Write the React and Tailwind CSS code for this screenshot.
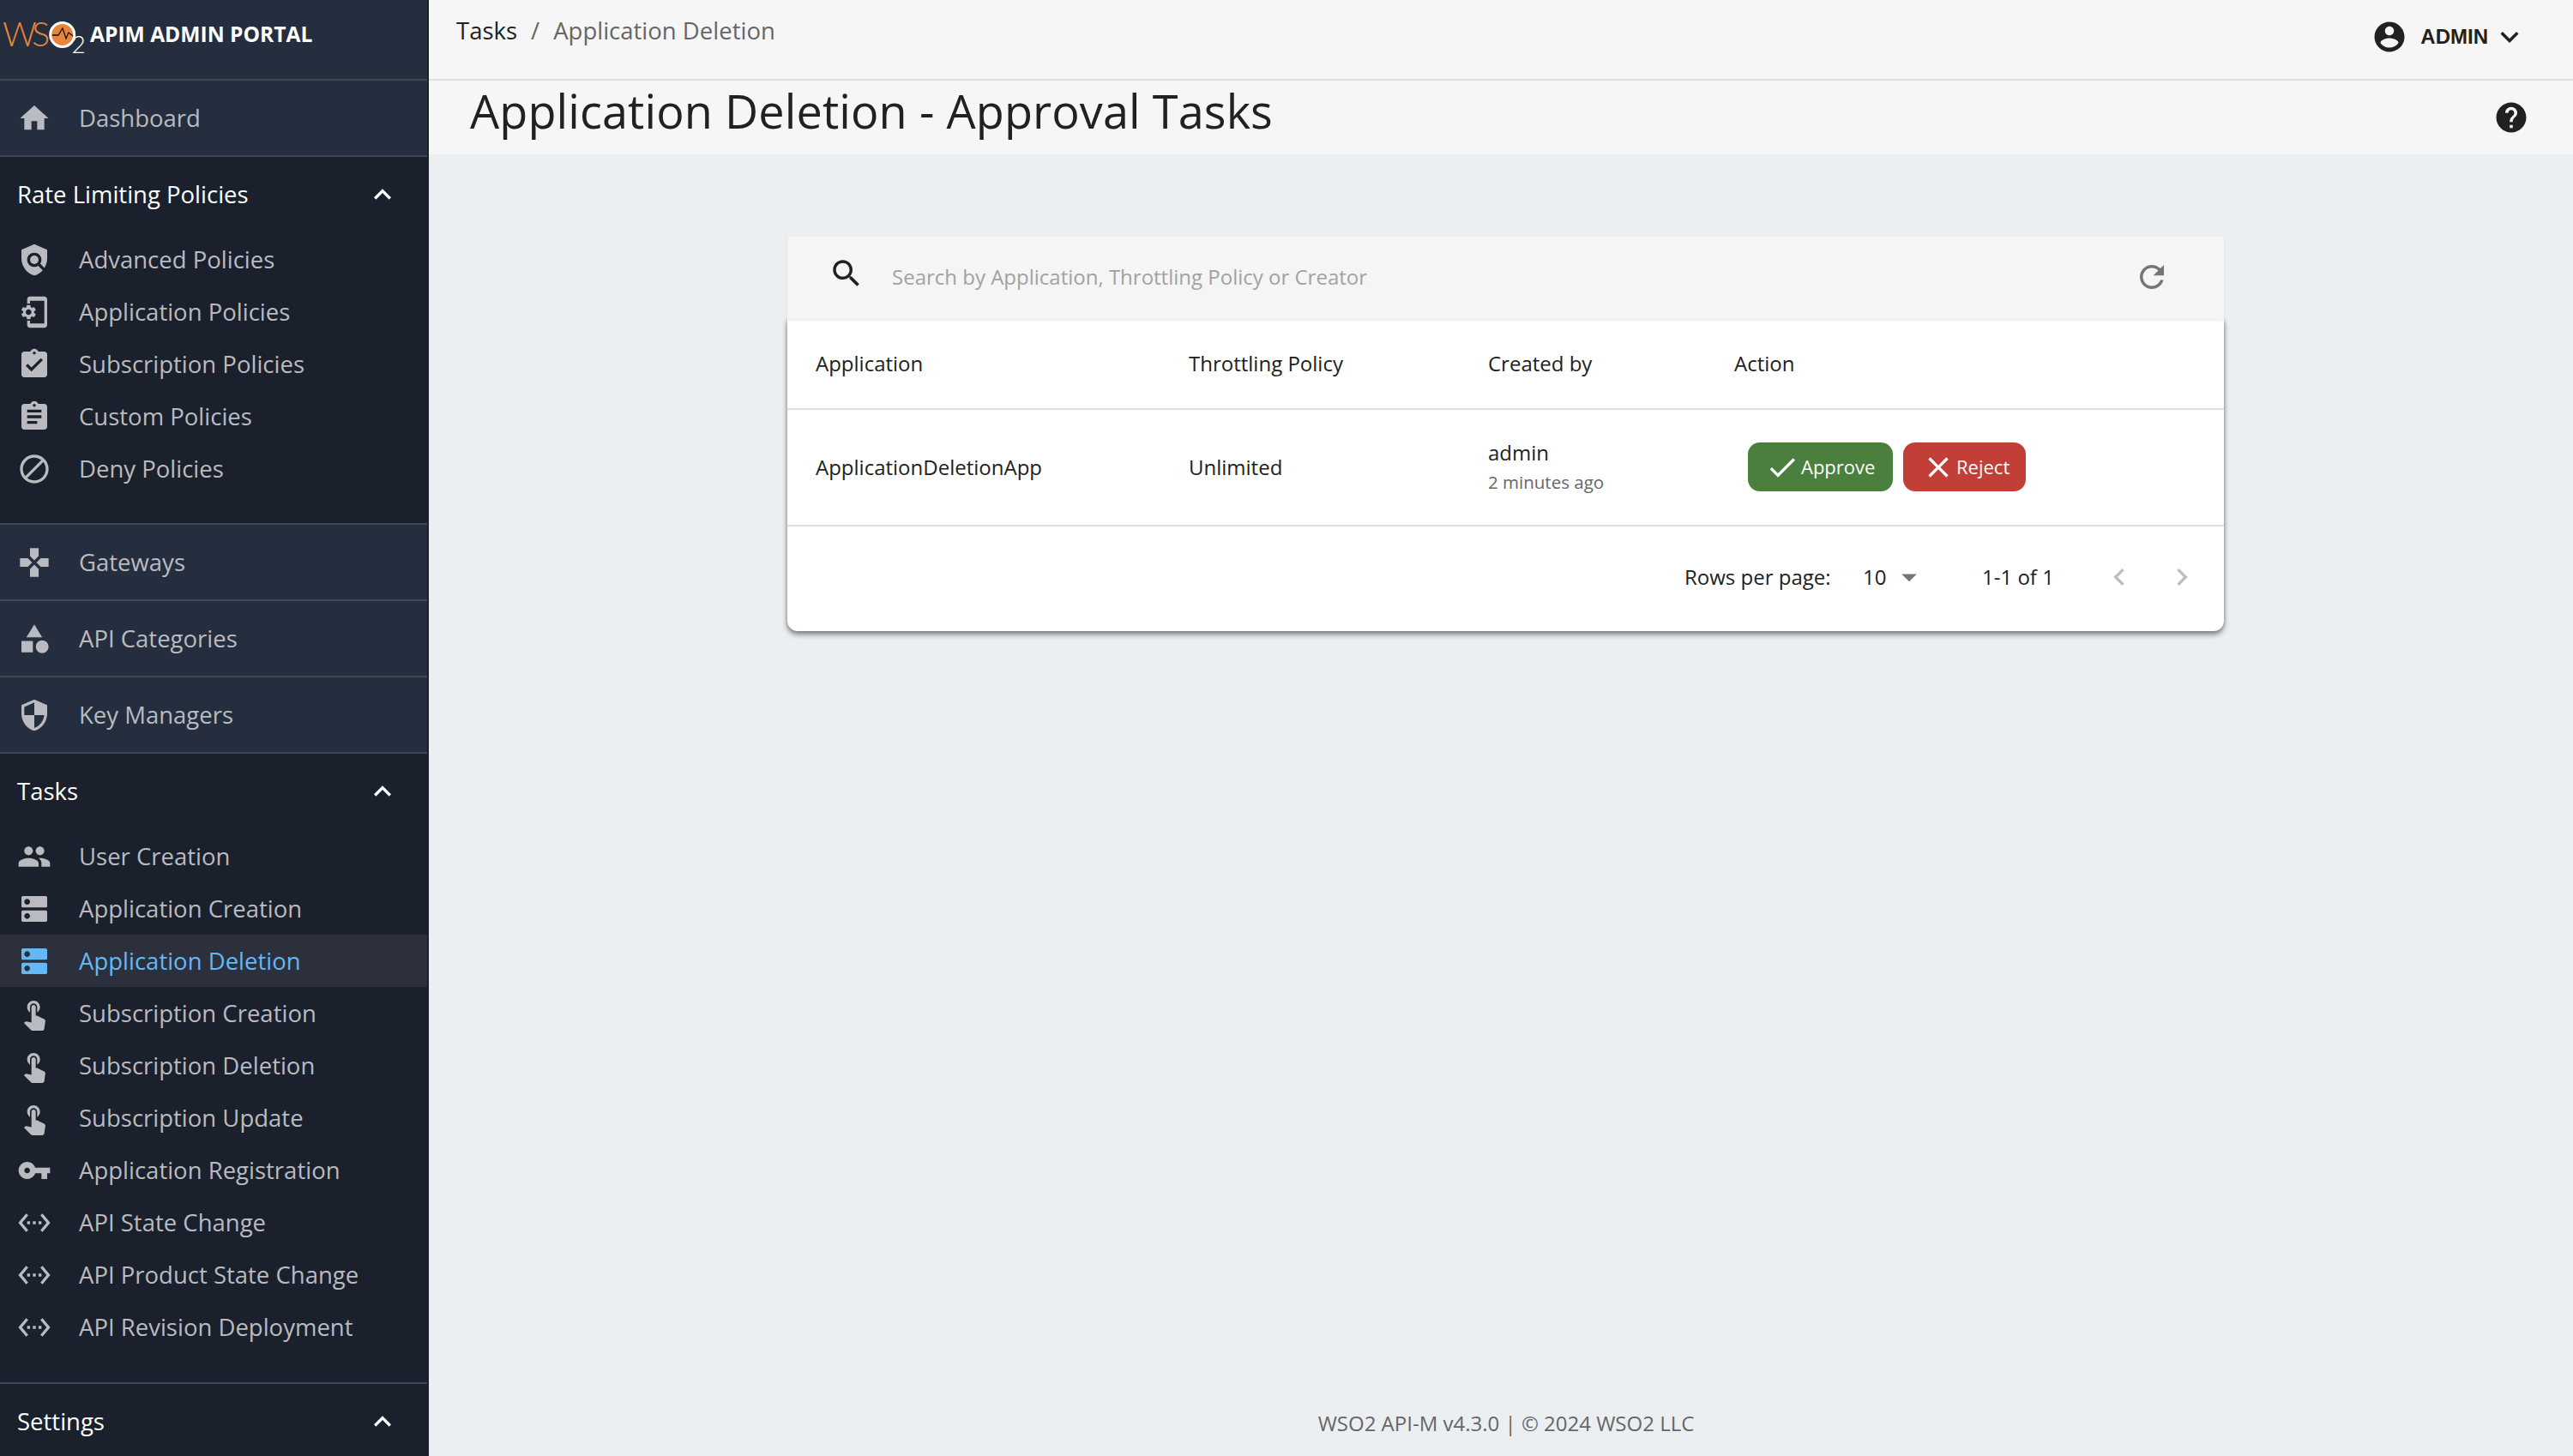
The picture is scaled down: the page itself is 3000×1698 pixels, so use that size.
const ICONS = {
  home: 'M10 20v-6h4v6h5v-8h3L12 3 2 12h3v8z',
  policy: 'M21 5l-9-4-9 4v6c0 5.55 3.84 10.74 9 12 2.3-.56 4.33-1.9 5.88-3.71l-3.12-3.12c-1.94 1.29-4.58 1.07-6.29-.64-1.95-1.95-1.95-5.12 0-7.07 1.95-1.95 5.12-1.95 7.07 0 1.71 1.71 1.92 4.35.64 6.29l2.9 2.9C20.29 15.69 21 13.38 21 11V5z M12 9a3 3 0 1 0 0 6 3 3 0 0 0 0-6z',
  phoneSetup: 'M11.8 12.5v-1l1.1-.8c.1-.1.1-.2.1-.3l-1-1.7c-.1-.1-.2-.2-.3-.1l-1.3.4c-.3-.2-.6-.4-.9-.5l-.2-1.3c0-.1-.1-.2-.3-.2H7c-.1 0-.2.1-.3.2l-.2 1.3c-.3.1-.6.3-.9.5l-1.3-.5c-.1 0-.2 0-.3.1l-1 1.7c-.1.1 0 .2.1.3l1.1.8v1l-1.1.8c-.1.2-.1.3-.1.4l1 1.7c.1.1.2.2.3.1l1.4-.4c.3.2.6.4.9.5l.2 1.3c-.1.1.1.2.2.2h2c.1 0 .2-.1.3-.2l.2-1.3c.3-.1.6-.3.9-.5l1.3.5c.1 0 .2 0 .3-.1l1-1.7c.1-.1 0-.2-.1-.3l-1.1-.9zM8 14c-1.1 0-2-.9-2-2s.9-2 2-2 2 .9 2 2-.9 2-2 2zM19 1H9c-1.1 0-2 .9-2 2v3h2V4h10v16H9v-2H7v3c0 1.1.9 2 2 2h10c1.1 0 2-.9 2-2V3c0-1.1-.9-2-2-2z',
  assignmentDone: 'M19 3h-4.18C14.4 1.84 13.3 1 12 1c-1.3 0-2.4.84-2.82 2H5c-1.1 0-2 .9-2 2v14c0 1.1.9 2 2 2h14c1.1 0 2-.9 2-2V5c0-1.1-.9-2-2-2zm-7 0c.55 0 1 .45 1 1s-.45 1-1 1-1-.45-1-1 .45-1 1-1zm-2 14l-4-4 1.41-1.41L10 14.17l6.59-6.59L18 9l-8 8z',
  assignment: 'M19 3h-4.18C14.4 1.84 13.3 1 12 1c-1.3 0-2.4.84-2.82 2H5c-1.1 0-2 .9-2 2v14c0 1.1.9 2 2 2h14c1.1 0 2-.9 2-2V5c0-1.1-.9-2-2-2zm-7 0c.55 0 1 .45 1 1s-.45 1-1 1-1-.45-1-1 .45-1 1-1zm2 14H7v-2h7v2zm3-4H7v-2h10v2zm0-4H7V7h10v2z',
  block: 'M12 2C6.48 2 2 6.48 2 12s4.48 10 10 10 10-4.48 10-10S17.52 2 12 2zM4 12c0-4.42 3.58-8 8-8 1.85 0 3.55.63 4.9 1.69L5.69 16.9C4.63 15.55 4 13.85 4 12zm8 8c-1.85 0-3.55-.63-4.9-1.69L18.31 7.1C19.37 8.45 20 10.15 20 12c0 4.42-3.58 8-8 8z',
  gamepad: 'M15 7.5V2H9v5.5l3 3 3-3zM7.5 9H2v6h5.5l3-3-3-3zM9 16.5V22h6v-5.5l-3-3-3 3zM16.5 9l-3 3 3 3H22V9h-5.5z',
  category: 'M12 2l-5.5 9h11z M17.5 13a4.5 4.5 0 1 0 0 9 4.5 4.5 0 0 0 0-9z M3 13.5h8v8H3z',
  security: 'M12 1L3 5v6c0 5.55 3.84 10.74 9 12 5.16-1.26 9-6.45 9-12V5l-9-4zm0 10.99h7c-.53 4.12-3.28 7.79-7 8.94V12H5V6.3l7-3.11v8.8z',
  people: 'M16 11c1.66 0 2.99-1.34 2.99-3S17.66 5 16 5c-1.66 0-3 1.34-3 3s1.34 3 3 3zm-8 0c1.66 0 2.99-1.34 2.99-3S9.66 5 8 5C6.34 5 5 6.34 5 8s1.34 3 3 3zm0 2c-2.33 0-7 1.17-7 3.5V19h14v-2.5c0-2.33-4.67-3.5-7-3.5zm8 0c-.29 0-.62.02-.97.05 1.16.84 1.97 1.97 1.97 3.45V19h6v-2.5c0-2.33-4.67-3.5-7-3.5z',
  dns: 'M20 13H4c-.55 0-1 .45-1 1v6c0 .55.45 1 1 1h16c.55 0 1-.45 1-1v-6c0-.55-.45-1-1-1zM7 19c-1.1 0-2-.9-2-2s.9-2 2-2 2 .9 2 2-.9 2-2 2zM20 3H4c-.55 0-1 .45-1 1v6c0 .55.45 1 1 1h16c.55 0 1-.45 1-1V4c0-.55-.45-1-1-1zM7 9c-1.1 0-2-.9-2-2s.9-2 2-2 2 .9 2 2-.9 2-2 2z',
  touch: 'M9 11.24V7.5C9 6.12 10.12 5 11.5 5S14 6.12 14 7.5v3.74c1.21-.81 2-2.18 2-3.74C16 5.01 13.99 3 11.5 3S7 5.01 7 7.5c0 1.56.79 2.93 2 3.74zm9.84 4.63l-4.54-2.26c-.17-.07-.35-.11-.54-.11H13v-6c0-.83-.67-1.5-1.5-1.5S10 6.67 10 7.5v10.74l-3.43-.72c-.08-.01-.15-.03-.24-.03-.31 0-.59.13-.79.33l-.79.8 4.94 4.94c.27.27.65.44 1.06.44h6.79c.75 0 1.33-.55 1.44-1.28l.75-5.27c.01-.07.02-.14.02-.2 0-.62-.38-1.16-.91-1.38z',
  key: 'M12.65 10C11.83 7.67 9.61 6 7 6c-3.31 0-6 2.69-6 6s2.69 6 6 6c2.61 0 4.83-1.67 5.65-4H17v4h4v-4h2v-4H12.65zM7 14c-1.1 0-2-.9-2-2s.9-2 2-2 2 .9 2 2-.9 2-2 2z',
  ethernet: 'M7.77 6.76L6.23 5.48.82 12l5.41 6.52 1.54-1.28L3.42 12l4.35-5.24zM7 13h2v-2H7v2zm10-2h-2v2h2v-2zm-6 2h2v-2h-2v2zm6.77-7.52l-1.54 1.28L20.58 12l-4.35 5.24 1.54 1.28L23.18 12l-5.41-6.52z',
  expandLess: 'M12 8l-6 6 1.41 1.41L12 10.83l4.59 4.58L18 14z',
  expandMore: 'M16.59 8.59L12 13.17 7.41 8.59 6 10l6 6 6-6z',
  account: 'M12 2C6.48 2 2 6.48 2 12s4.48 10 10 10 10-4.48 10-10S17.52 2 12 2zm0 3c1.66 0 3 1.34 3 3s-1.34 3-3 3-3-1.34-3-3 1.34-3 3-3zm0 14.2c-2.5 0-4.71-1.28-6-3.22.03-1.99 4-3.08 6-3.08 1.99 0 5.97 1.09 6 3.08-1.29 1.94-3.5 3.22-6 3.22z',
  help: 'M12 2C6.48 2 2 6.48 2 12s4.48 10 10 10 10-4.48 10-10S17.52 2 12 2zm1 17h-2v-2h2v2zm2.07-7.75l-.9.92C13.45 12.9 13 13.5 13 15h-2v-.5c0-1.1.45-2.1 1.17-2.83l1.24-1.26c.37-.36.59-.86.59-1.41 0-1.1-.9-2-2-2s-2 .9-2 2H8c0-2.21 1.79-4 4-4s4 1.79 4 4c0 .88-.36 1.68-.93 2.25z',
  search: 'M15.5 14h-.79l-.28-.27C15.41 12.59 16 11.11 16 9.5 16 5.91 13.09 3 9.5 3S3 5.91 3 9.5 5.91 16 9.5 16c1.61 0 3.09-.59 4.23-1.57l.27.28v.79l5 4.99L20.49 19l-4.99-5zm-6 0C7.01 14 5 11.99 5 9.5S7.01 5 9.5 5 14 7.01 14 9.5 11.99 14 9.5 14z',
  refresh: 'M17.65 6.35C16.2 4.9 14.21 4 12 4c-4.42 0-7.99 3.58-7.99 8s3.57 8 7.99 8c3.73 0 6.84-2.55 7.73-6h-2.08c-.82 2.33-3.04 4-5.65 4-3.31 0-6-2.69-6-6s2.69-6 6-6c1.66 0 3.14.69 4.22 1.78L13 11h7V4l-2.35 2.35z',
  done: 'M9 16.2L4.8 12l-1.4 1.4L9 19 21 7l-1.4-1.4L9 16.2z',
  close: 'M19 6.41L17.59 5 12 10.59 6.41 5 5 6.41 10.59 12 5 17.59 6.41 19 12 13.41 17.59 19 19 17.59 13.41 12z',
  chevronLeft: 'M15.41 7.41L14 6l-6 6 6 6 1.41-1.41L10.83 12z',
  chevronRight: 'M10 6L8.59 7.41 13.17 12l-4.58 4.59L10 18l6-6z',
  dropDown: 'M7 10l5 5 5-5z',
};

const Icon = ({ name, className }) => (
  <svg viewBox="0 0 24 24" fill="currentColor" className={className}>
    <path d={ICONS[name]} />
  </svg>
);

const Logo = () => (
  <svg viewBox="0 0 104 70" className="w-[104px] h-[70px] shrink-0 self-start">
    <text x="3" y="54" fontFamily="Lato, sans-serif" fontWeight="300" fontSize="39" fill="#e8853a" textLength="55">WS</text>
    <circle cx="72.7" cy="40.5" r="14" fill="#e8853a" stroke="#fff" strokeWidth="3" />
    <polyline points="61,41 68,41 73,33 77,45 80,38 85,42" fill="none" stroke="#111" strokeWidth="1.3" />
    <text x="83.5" y="62" fontFamily="Lato, sans-serif" fontWeight="300" fontSize="28" fill="#fff">2</text>
  </svg>
);

const NavRow = ({ icon, label, active }) => (
  <div className={`flex items-center h-[61px] pl-5 mr-[2px] ${active ? 'bg-[#2c303c] text-[#64b8f4]' : 'text-[#b9bbc0]'}`}>
    <Icon name={icon} className="w-10 h-10 shrink-0 mr-8" />
    <span className="text-[27.5px]">{label}</span>
  </div>
);

const TopRow = ({ icon, label }) => (
  <div className="flex items-center h-[89px] pl-5 mr-[2px] bg-[#252e3e] border-b-2 border-[#3e4654] text-[#b9bbc0]">
    <Icon name={icon} className="w-10 h-10 shrink-0 mr-8" />
    <span className="text-[27.5px]">{label}</span>
  </div>
);

const Section = ({ title, children }) => (
  <div>
    <div className="flex items-center justify-between h-[89px] pl-5 pr-[34px] text-white">
      <span className="text-[27.5px] -mt-[2px]">{title}</span>
      <Icon name="expandLess" className="w-10 h-10 -mt-[2px]" />
    </div>
    {children}
  </div>
);

const Sidebar = () => (
  <aside className="w-[500px] shrink-0 h-full bg-[#1a202c] overflow-hidden">
    <div className="flex items-center h-[94px] mr-[2px] bg-[#252e3e] border-b-2 border-[#3e4654] text-white">
      <Logo />
      <span className="ml-px -mt-[12px] text-[24.6px] font-bold whitespace-nowrap">APIM ADMIN PORTAL</span>
    </div>
    <TopRow icon="home" label="Dashboard" />
    <Section title="Rate Limiting Policies">
      <NavRow icon="policy" label="Advanced Policies" />
      <NavRow icon="phoneSetup" label="Application Policies" />
      <NavRow icon="assignmentDone" label="Subscription Policies" />
      <NavRow icon="assignment" label="Custom Policies" />
      <NavRow icon="block" label="Deny Policies" />
    </Section>
    <div className="mt-[33px] mr-[2px] border-b-2 border-[#3e4654]" />
    <TopRow icon="gamepad" label="Gateways" />
    <TopRow icon="category" label="API Categories" />
    <TopRow icon="security" label="Key Managers" />
    <Section title="Tasks">
      <NavRow icon="people" label="User Creation" />
      <NavRow icon="dns" label="Application Creation" />
      <NavRow icon="dns" label="Application Deletion" active />
      <NavRow icon="touch" label="Subscription Creation" />
      <NavRow icon="touch" label="Subscription Deletion" />
      <NavRow icon="touch" label="Subscription Update" />
      <NavRow icon="key" label="Application Registration" />
      <NavRow icon="ethernet" label="API State Change" />
      <NavRow icon="ethernet" label="API Product State Change" />
      <NavRow icon="ethernet" label="API Revision Deployment" />
    </Section>
    <div className="mt-[34px] mr-[2px] border-b-2 border-[#3e4654]" />
    <Section title="Settings" />
  </aside>
);

const Header = () => (
  <header className="bg-[#f6f6f6]">
    <div className="flex items-start justify-between h-[94px] border-b-2 border-[#dfdfdf] pl-8 pr-[53px]">
      <div className="flex items-center gap-[16px] h-[71px] text-[27.5px]">
        <span className="text-[#212121]">Tasks</span>
        <span className="text-[#666]">/</span>
        <span className="text-[#666]">Application Deletion</span>
      </div>
      <div className="flex items-center h-[86px] text-[#212121]">
        <Icon name="account" className="w-[42px] h-[42px]" />
        <span className="ml-[15px] mr-[4px] font-['Liberation_Sans',sans-serif] font-bold text-[24px]">ADMIN</span>
        <Icon name="expandMore" className="w-[42px] h-[42px]" />
      </div>
    </div>
    <div className="flex items-center justify-between h-[86px] pl-[48px] pr-[51px] text-[#212121]">
      <h1 className="text-[54px] leading-none tracking-[0.1px] -mt-[16px] font-normal">Application Deletion - Approval Tasks</h1>
      <Icon name="help" className="w-[42px] h-[42px]" />
    </div>
  </header>
);

const TableCard = () => (
  <div className="w-[1675px] ml-[418px] mt-[96px] text-[#212121] text-[24px]">
    <div className="relative z-10 flex items-center h-[96px] bg-[#f5f5f5] pl-12 pr-[63px] rounded-t-sm shadow-[0_2px_3px_rgba(0,0,0,0.08)]">
      <Icon name="search" className="w-[42px] h-[42px] -mt-[10px]" />
      <span className="ml-8 flex-1 -mt-[2px] text-[#a2a2a2]">Search by Application, Throttling Policy or Creator</span>
      <Icon name="refresh" className="w-[42px] h-[42px] -mt-[2px] text-[#757575]" />
    </div>
    <div className="bg-white rounded-b-xl shadow-[0_4px_6px_rgba(0,0,0,0.45),0_0_4px_rgba(0,0,0,0.18)]">
      <div className="flex items-center h-[106px] pl-[33px] border-b-2 border-[#e0e0e0]">
        <div className="w-[435px]">Application</div>
        <div className="w-[349px]">Throttling Policy</div>
        <div className="w-[287px]">Created by</div>
        <div>Action</div>
      </div>
      <div className="flex items-center h-[136px] pl-[33px] border-b-2 border-[#e0e0e0]">
        <div className="w-[435px]">ApplicationDeletionApp</div>
        <div className="w-[349px]">Unlimited</div>
        <div className="w-[287px] -mt-[3px]">
          <div className="leading-[34px] mb-[2px]">admin</div>
          <div className="text-[20.5px] leading-[30px] text-[#666]">2 minutes ago</div>
        </div>
        <div className="flex gap-3 ml-4 -mt-[1px]">
          <button className="flex items-center h-[57px] w-[169px] pl-5 rounded-[14px] bg-[#4a7f3e] text-white text-[22px]">
            <Icon name="done" className="w-10 h-10 mr-[2px]" />
            Approve
          </button>
          <button className="flex items-center h-[57px] w-[143px] pl-[21px] rounded-[14px] bg-[#c23f38] text-white text-[22px]">
            <Icon name="close" className="w-10 h-10 mr-px" />
            Reject
          </button>
        </div>
      </div>
      <div className="flex items-center h-[122px] pb-[5px] pl-[1046px]">
        <span className="w-[208px]">Rows per page:</span>
        <span className="w-[33px]">10</span>
        <Icon name="dropDown" className="w-[42px] h-[42px] text-[#757575]" />
        <span className="ml-[64px] w-[82px] whitespace-nowrap">1-1 of 1</span>
        <Icon name="chevronLeft" className="ml-[58px] w-10 h-10 text-[#bdbdbd]" />
        <Icon name="chevronRight" className="ml-[33px] w-10 h-10 text-[#bdbdbd]" />
      </div>
    </div>
  </div>
);

export default function App() {
  return (
    <div className="flex w-[3000px] h-[1698px] overflow-hidden font-['Open_Sans',sans-serif] bg-[#eceff1]">
      <Sidebar />
      <main className="flex-1 flex flex-col">
        <Header />
        <TableCard />
        <footer className="mt-auto pb-5 pl-3 text-center text-[24px] text-[#666]">
          WSO2 API-M v4.3.0 | © 2024 WSO2 LLC
        </footer>
      </main>
    </div>
  );
}
